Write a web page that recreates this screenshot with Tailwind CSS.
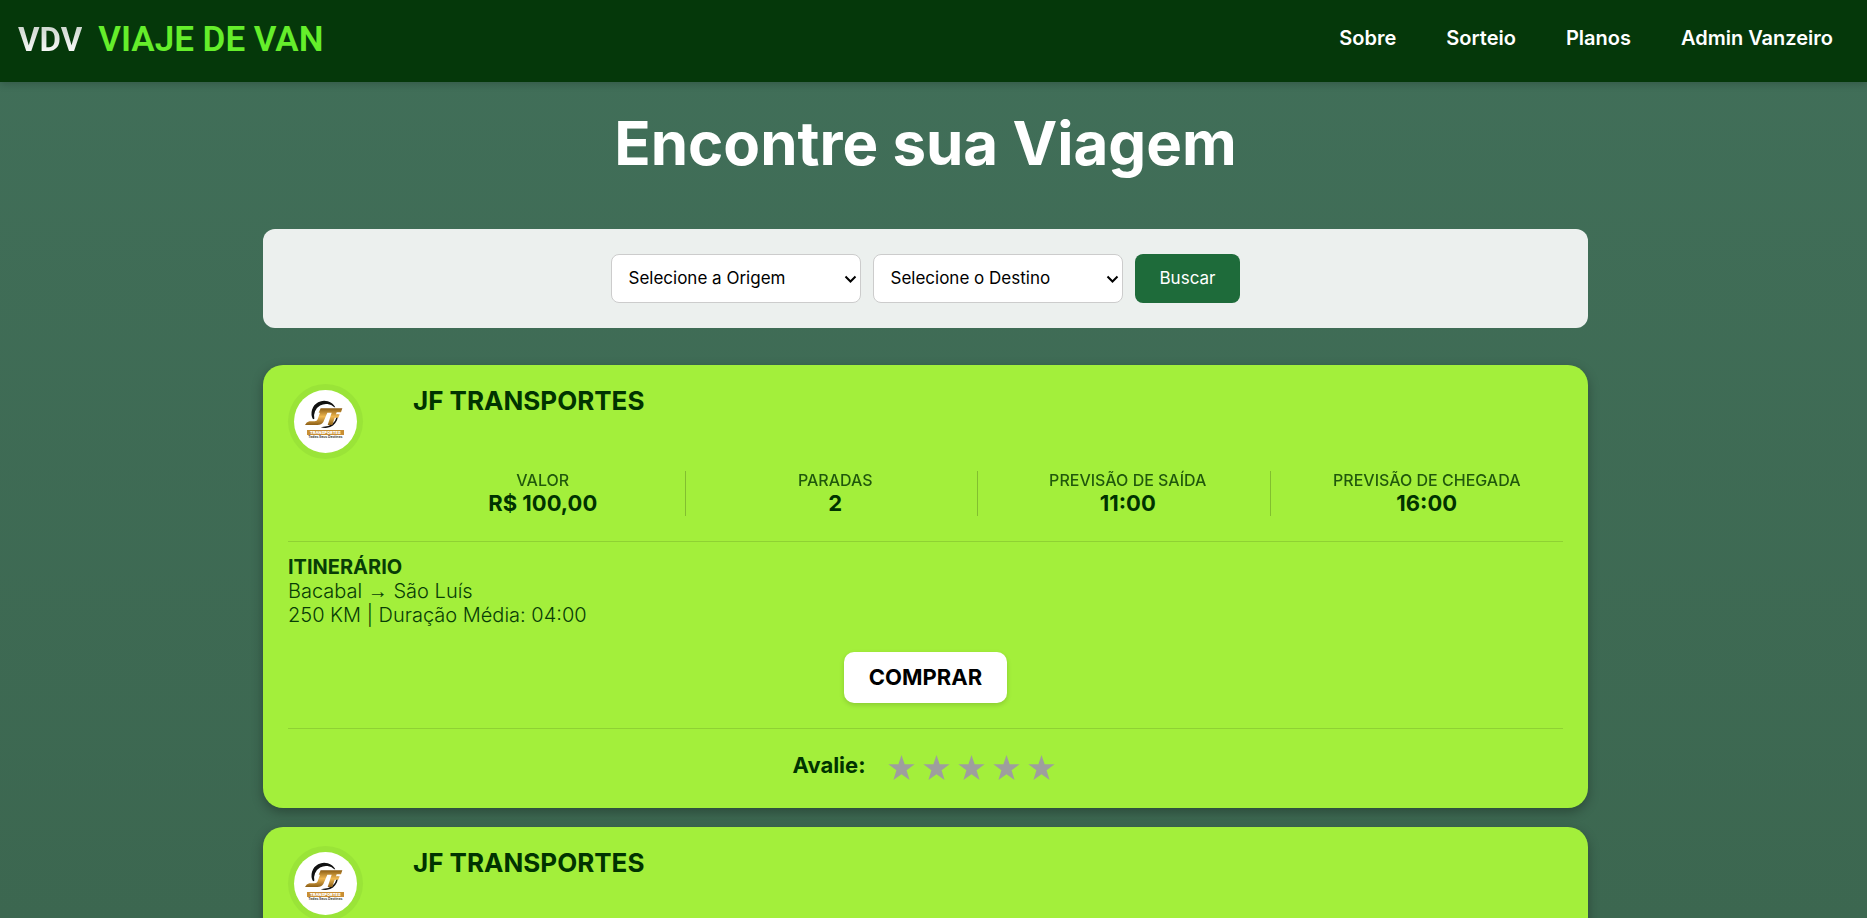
<!DOCTYPE html>
<html lang="pt-BR">
<head>
  <meta charset="UTF-8" />
  <meta name="viewport" content="width=device-width, initial-scale=1.0" />
  <title>Viaje de Van - Encontre sua Viagem</title>
  <script src="https://cdn.jsdelivr.net/npm/@tailwindcss/browser@4"></script>
  <style>
    body { font-family: 'Inter', sans-serif; }
  </style>
</head>
<body class="min-h-screen bg-linear-to-b from-[#416f59] to-[#3c6750] bg-fixed">
  <!-- Navbar -->
  <header class="relative flex items-center justify-between h-[82px] pl-[18px] pr-[34px] pb-[6px] bg-[#05380a] shadow-[0_2px_8px_rgba(0,0,0,0.2)]">
    <a href="#" class="flex items-center gap-4 pt-[2px] font-[Roboto] text-[35px] leading-none">
      <span class="font-bold text-[33px] bg-linear-to-b from-[#c9d2ca] to-white bg-clip-text text-transparent">VDV</span>
      <span class="font-semibold text-[#65ee2b]">VIAJE DE VAN</span>
    </a>
    <nav class="flex items-center gap-[50px] text-[20px] font-semibold text-white">
      <a href="#">Sobre</a>
      <a href="#">Sorteio</a>
      <a href="#">Planos</a>
      <a href="#">Admin Vanzeiro</a>
    </nav>
  </header>

  <main class="pr-4">
    <div class="max-w-[1325px] mx-auto">
      <h1 class="pt-[25px] text-center text-[60px] leading-[73px] font-bold text-white">Encontre sua Viagem</h1>

      <!-- Busca -->
      <form class="flex justify-center gap-3 mt-[49px] p-[25px] rounded-xl bg-white/90" onsubmit="return false">
        <div class="relative">
          <select aria-label="Origem" class="appearance-none w-[250px] h-[49px] pl-[17px] rounded-lg border border-[#ccc] bg-white text-[17px] text-black">
            <option>Selecione a Origem</option>
            <option>Bacabal</option>
          </select>
          <svg class="absolute right-1 top-[21px] w-[13px] h-[9px] pointer-events-none" viewBox="0 0 13 9" fill="none" stroke="#000" stroke-width="2"><path d="M1.5 1.5L6.5 6.5L11.5 1.5" /></svg>
        </div>
        <div class="relative">
          <select aria-label="Destino" class="appearance-none w-[250px] h-[49px] pl-[17px] rounded-lg border border-[#ccc] bg-white text-[17px] text-black">
            <option>Selecione o Destino</option>
            <option>São Luís</option>
          </select>
          <svg class="absolute right-1 top-[21px] w-[13px] h-[9px] pointer-events-none" viewBox="0 0 13 9" fill="none" stroke="#000" stroke-width="2"><path d="M1.5 1.5L6.5 6.5L11.5 1.5" /></svg>
        </div>
        <button type="submit" class="h-[49px] px-[25px] rounded-lg bg-[#1e6b3a] text-[17px] text-white">Buscar</button>
      </form>

      <div id="viagens" class="mt-[37px] space-y-[19px] pb-10"></div>
    </div>
  </main>

  <!-- Logo da JF Transportes, reutilizada em cada card -->
  <svg class="absolute w-0 h-0">
    <defs>
      <linearGradient id="ouro" x1="0" y1="0" x2="0" y2="1">
        <stop offset="0" stop-color="#8d5f16" />
        <stop offset="0.5" stop-color="#f0b850" />
        <stop offset="1" stop-color="#8d5f16" />
      </linearGradient>
    </defs>
    <symbol id="logo-jf" viewBox="0 0 189 189">
      <path d="M57 88A38 38 0 0 1 124 52L121 52A36 36 0 0 0 61 86Z" fill="#111" />
      <path d="M132 72A38 38 0 0 1 80 111Q120 113 129 78Z" fill="#111" />
      <path d="M80 55H145L141 67H128L126 73H137L133 83H122L115 105H101L113 68H100L88 96Q83 105 70 105H33Q37 96 46 94H62Q69 94 71 88L78 68H74Z" fill="url(#ouro)" />
      <rect x="39" y="120" width="111" height="15" fill="#c98f35" />
      <text x="94" y="132" text-anchor="middle" font-size="12" font-weight="900" fill="#fff">TRANSPORTES</text>
      <text x="94" y="143" text-anchor="middle" font-size="10" font-weight="700" fill="#444">Todos Seus Destinos</text>
    </symbol>
  </svg>

  <script>
    const viagens = [
      { empresa: "JF TRANSPORTES", valor: "R$ 100,00", paradas: 2, saida: "11:00", chegada: "16:00", origem: "Bacabal", destino: "São Luís", km: 250, duracao: "04:00" },
      { empresa: "JF TRANSPORTES", valor: "R$ 100,00", paradas: 2, saida: "11:00", chegada: "16:00", origem: "Bacabal", destino: "São Luís", km: 250, duracao: "04:00" }
    ];

    function estrelas() {
      let html = "";
      for (let i = 1; i <= 5; i++) {
        html += `
          <button type="button" aria-label="${i} de 5" class="text-[#9e9e9e]">
            <svg class="w-[27px] h-[25px]" viewBox="0 0 27 25" fill="currentColor">
              <path d="M13.5 0L16.6 9.2H26.6L18.6 15.2L21.6 25L13.5 19.2L5.4 25L8.4 15.2L0.4 9.2H10.4Z" />
            </svg>
          </button>
        `;
      }
      return html;
    }

    function loadViagens() {
      const container = document.getElementById("viagens");
      viagens.forEach((v) => {
        container.innerHTML += `
          <article class="px-[25px] pt-[19px] pb-7 rounded-[20px] bg-[#a3ef3b] text-[#003300] shadow-[0_4px_12px_rgba(0,0,0,0.3)]">
            <div class="flex gap-[50px]">
              <div class="shrink-0 w-[75px] h-[75px] p-[6px] rounded-full bg-[#9ae438]">
                <svg class="w-[63px] h-[63px] rounded-full bg-white"><use href="#logo-jf" /></svg>
              </div>
              <div class="flex-1">
                <h2 class="h-[75px] mb-3 text-[26px] leading-[33px] font-bold">${v.empresa}</h2>
                <dl class="grid grid-cols-4 gap-5 text-center">
                  <div class="pr-3 border-r border-black/20">
                    <dt class="text-[16px] leading-[19px] font-medium opacity-80">VALOR</dt>
                    <dd class="text-[22px] leading-[26px] font-bold">${v.valor}</dd>
                  </div>
                  <div class="pr-3 border-r border-black/20">
                    <dt class="text-[16px] leading-[19px] font-medium opacity-80">PARADAS</dt>
                    <dd class="text-[22px] leading-[26px] font-bold">${v.paradas}</dd>
                  </div>
                  <div class="pr-3 border-r border-black/20">
                    <dt class="text-[16px] leading-[19px] font-medium opacity-80">PREVISÃO DE SAÍDA</dt>
                    <dd class="text-[22px] leading-[26px] font-bold">${v.saida}</dd>
                  </div>
                  <div>
                    <dt class="text-[16px] leading-[19px] font-medium opacity-80">PREVISÃO DE CHEGADA</dt>
                    <dd class="text-[22px] leading-[26px] font-bold">${v.chegada}</dd>
                  </div>
                </dl>
              </div>
            </div>
            <div class="mt-[25px] pt-[13px] border-t border-black/12 text-[20px] leading-[24px] font-light text-[#083d06]">
              <h3 class="font-bold">ITINERÁRIO</h3>
              <p>${v.origem} <span class="font-['Liberation_Sans']">→</span> ${v.destino}</p>
              <p>${v.km} KM | Duração Média: ${v.duracao}</p>
            </div>
            <div class="flex justify-center mt-[25px]">
              <button type="button" class="h-[51px] px-[25px] rounded-[10px] bg-white text-[22px] font-bold text-black shadow-[0_2px_5px_rgba(0,0,0,0.15)]">COMPRAR</button>
            </div>
            <div class="flex justify-center items-center gap-[22px] mt-[25px] pt-[21px] pr-1 border-t border-black/12">
              <span class="text-[22px] leading-[30px] font-bold">Avalie:</span>
              <div class="flex gap-2 pt-1">${estrelas()}</div>
            </div>
          </article>
        `;
      });
    }

    window.onload = loadViagens;
  </script>
</body>
</html>
